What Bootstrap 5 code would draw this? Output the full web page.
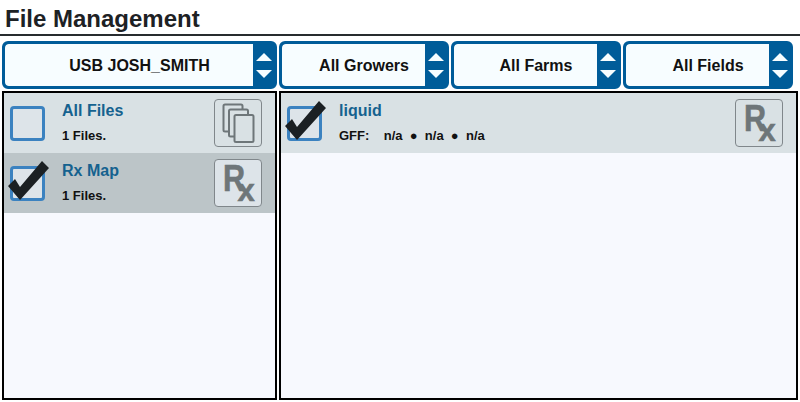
<!DOCTYPE html>
<html lang="en">
<head>
  <meta charset="UTF-8" />
  <title>File Management</title>
  <link rel="stylesheet" href="https://cdn.jsdelivr.net/npm/bootstrap@5.3.0/dist/css/bootstrap.min.css"/>
  <style>
    html, body { width: 800px; height: 402px; overflow: hidden; background: #fff; font-family: "Liberation Sans", Arial, sans-serif; color: #000; }
    .page-head { height: 36px; border-bottom: 2px solid #282c2f; padding-left: 5px; }
    .page-head h1 { font-size: 24px; font-weight: 700; line-height: 37px; margin: 0; color: #1d2124; font-family: inherit; }
    .picker-row { height: 55px; padding: 5px 7px 2px 2px; gap: 2px; }
    .picker { width: 170px; height: 48px; border: 3px solid #005c99; border-radius: 6px; background: #005c99; overflow: hidden; }
    .picker-wide { width: 275px; }
    .picker-label { background: #f7fdff; border-radius: 4px 0 0 4px; font-size: 16px; font-weight: 700; color: #111; padding: 2px 0 0 21px; }
    .picker-arrows { width: 21px; flex: none; gap: 9px; }
    .arrow-up, .arrow-down { width: 0; height: 0; border-left: 8px solid transparent; border-right: 8px solid transparent; }
    .arrow-up { border-bottom: 8px solid #f7fdff; }
    .arrow-down { border-top: 8px solid #f7fdff; }
    .panels { height: 309px; padding: 0 2px; gap: 2px; }
    .panel { border: 2px solid #000; background: #f7f9fe; height: 309px; }
    .panel-left { width: 275px; }
    .panel-right { width: 519px; }
    .file-row { height: 60px; background: #d9e1e4; }
    .file-row.picked { background: #bcc5c8; }
    .tick-box { width: 35px; height: 35px; margin-left: 6px; flex: none; position: relative; border: 3px solid #3b82c0; border-radius: 4px; background: #dde4e9; }
    .tick-box svg { position: absolute; left: -6px; top: -9px; }
    .file-text { margin-left: 17px; padding-top: 9px; }
    .file-name { font-size: 16px; font-weight: 700; line-height: 18px; color: #15628f; }
    .file-sub { font-size: 13px; font-weight: 700; line-height: 15px; margin-top: 8px; color: #111; white-space: pre; }
    .thumb { width: 48px; height: 48px; margin: 6px 13px 0 0; border: 1px solid #80878b; border-radius: 4px; background: #dde4e9; }
    .thumb-plain { background: #d9e1e4; }
    .rx-mark { font-size: 36px; font-weight: 700; line-height: 36px; color: #6e7679; padding-left: 2px; margin-bottom: 4px; white-space: nowrap; -webkit-text-stroke: 0.6px #6e7679; }
    .rx-main { display: inline-block; transform: scaleX(0.85); transform-origin: left center; }
    .rx-sub { font-size: 31px; line-height: 20px; margin-left: -12px; vertical-align: -10px; }
  </style>
</head>
<body>
  <div class="page-head"><h1>File Management</h1></div>

  <div class="picker-row d-flex">
    <div class="picker picker-wide d-flex">
      <div class="picker-label flex-grow-1 d-flex align-items-center justify-content-center">USB JOSH_SMITH</div>
      <div class="picker-arrows d-flex flex-column align-items-center justify-content-center"><div class="arrow-up"></div><div class="arrow-down"></div></div>
    </div>
    <div class="picker d-flex">
      <div class="picker-label flex-grow-1 d-flex align-items-center justify-content-center">All Growers</div>
      <div class="picker-arrows d-flex flex-column align-items-center justify-content-center"><div class="arrow-up"></div><div class="arrow-down"></div></div>
    </div>
    <div class="picker d-flex">
      <div class="picker-label flex-grow-1 d-flex align-items-center justify-content-center">All Farms</div>
      <div class="picker-arrows d-flex flex-column align-items-center justify-content-center"><div class="arrow-up"></div><div class="arrow-down"></div></div>
    </div>
    <div class="picker d-flex">
      <div class="picker-label flex-grow-1 d-flex align-items-center justify-content-center">All Fields</div>
      <div class="picker-arrows d-flex flex-column align-items-center justify-content-center"><div class="arrow-up"></div><div class="arrow-down"></div></div>
    </div>
  </div>

  <div class="panels d-flex">
    <div class="panel panel-left">
      <div class="file-row d-flex align-items-center">
        <div class="tick-box"></div>
        <div class="file-text flex-grow-1 align-self-start">
          <div class="file-name">All Files</div>
          <div class="file-sub">1 Files.</div>
        </div>
        <div class="thumb thumb-plain align-self-start">
          <svg class="d-block" width="46" height="46" viewBox="0 0 46 46" fill="#d9e1e4" stroke="#6e7679" stroke-width="2">
            <rect x="8.5" y="4.5" width="19" height="27" rx="1.5"/>
            <rect x="14" y="9.5" width="19" height="27" rx="1.5"/>
            <rect x="19.5" y="15" width="19" height="27" rx="1.5"/>
          </svg>
        </div>
      </div>
      <div class="file-row picked d-flex align-items-center">
        <div class="tick-box">
          <svg width="44" height="42" viewBox="0 0 44 42" fill="#1b2023"><polygon points="1,26 8,19 13,27 35,1 42,8 13,40"/></svg>
        </div>
        <div class="file-text flex-grow-1 align-self-start">
          <div class="file-name">Rx Map</div>
          <div class="file-sub">1 Files.</div>
        </div>
        <div class="thumb align-self-start d-flex align-items-center justify-content-center"><span class="rx-mark"><span class="rx-main">R</span><span class="rx-sub">x</span></span></div>
      </div>
    </div>

    <div class="panel panel-right">
      <div class="file-row d-flex align-items-center">
        <div class="tick-box">
          <svg width="44" height="42" viewBox="0 0 44 42" fill="#1b2023"><polygon points="1,26 8,19 13,27 35,1 42,8 13,40"/></svg>
        </div>
        <div class="file-text flex-grow-1 align-self-start">
          <div class="file-name">liquid</div>
          <div class="file-sub">GFF:    n/a  ●  n/a  ●  n/a</div>
        </div>
        <div class="thumb thumb-plain align-self-start d-flex align-items-center justify-content-center"><span class="rx-mark"><span class="rx-main">R</span><span class="rx-sub">x</span></span></div>
      </div>
    </div>
  </div>

  <script src="https://cdn.jsdelivr.net/npm/bootstrap@5.3.0/dist/js/bootstrap.bundle.min.js"></script>
</body>
</html>
